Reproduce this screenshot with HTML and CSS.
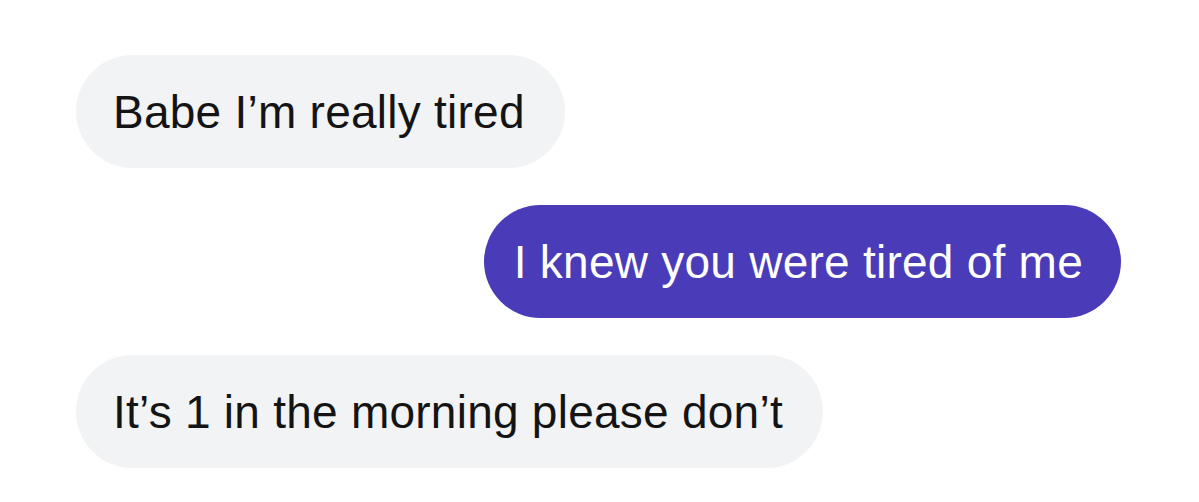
FILE: index.html
```html
<!DOCTYPE html>
<html>
<head>
<meta charset="utf-8">
<link rel="stylesheet" href="styles.css">
</head>
<body>
<div class="thread">
  <div class="bubble in">Babe I’m really tired</div>
  <div class="bubble out">I knew you were tired of me</div>
  <div class="bubble in">It’s 1 in the morning please don’t</div>
</div>
</body>
</html>
```
FILE: styles.css
```css
html, body {
  margin: 0;
  padding: 0;
  background: #ffffff;
}
.thread {
  display: flex;
  flex-direction: column;
  gap: 37px;
  padding: 55px 78px 0 76px;
  font-family: "Liberation Sans", Arial, sans-serif;
  font-size: 46px;
  letter-spacing: 0.25px;
}
.bubble {
  height: 113px;
  display: flex;
  align-items: center;
  border-radius: 57px;
  box-sizing: border-box;
  line-height: 1;
}
.in {
  align-self: flex-start;
  padding: 0 40px 0 37px;
  background: #f1f3f4;
  color: #141414;
}
.out {
  align-self: flex-end;
  padding: 0 38px 0 30px;
  background: #4a3cb8;
  color: #ffffff;
}
```
